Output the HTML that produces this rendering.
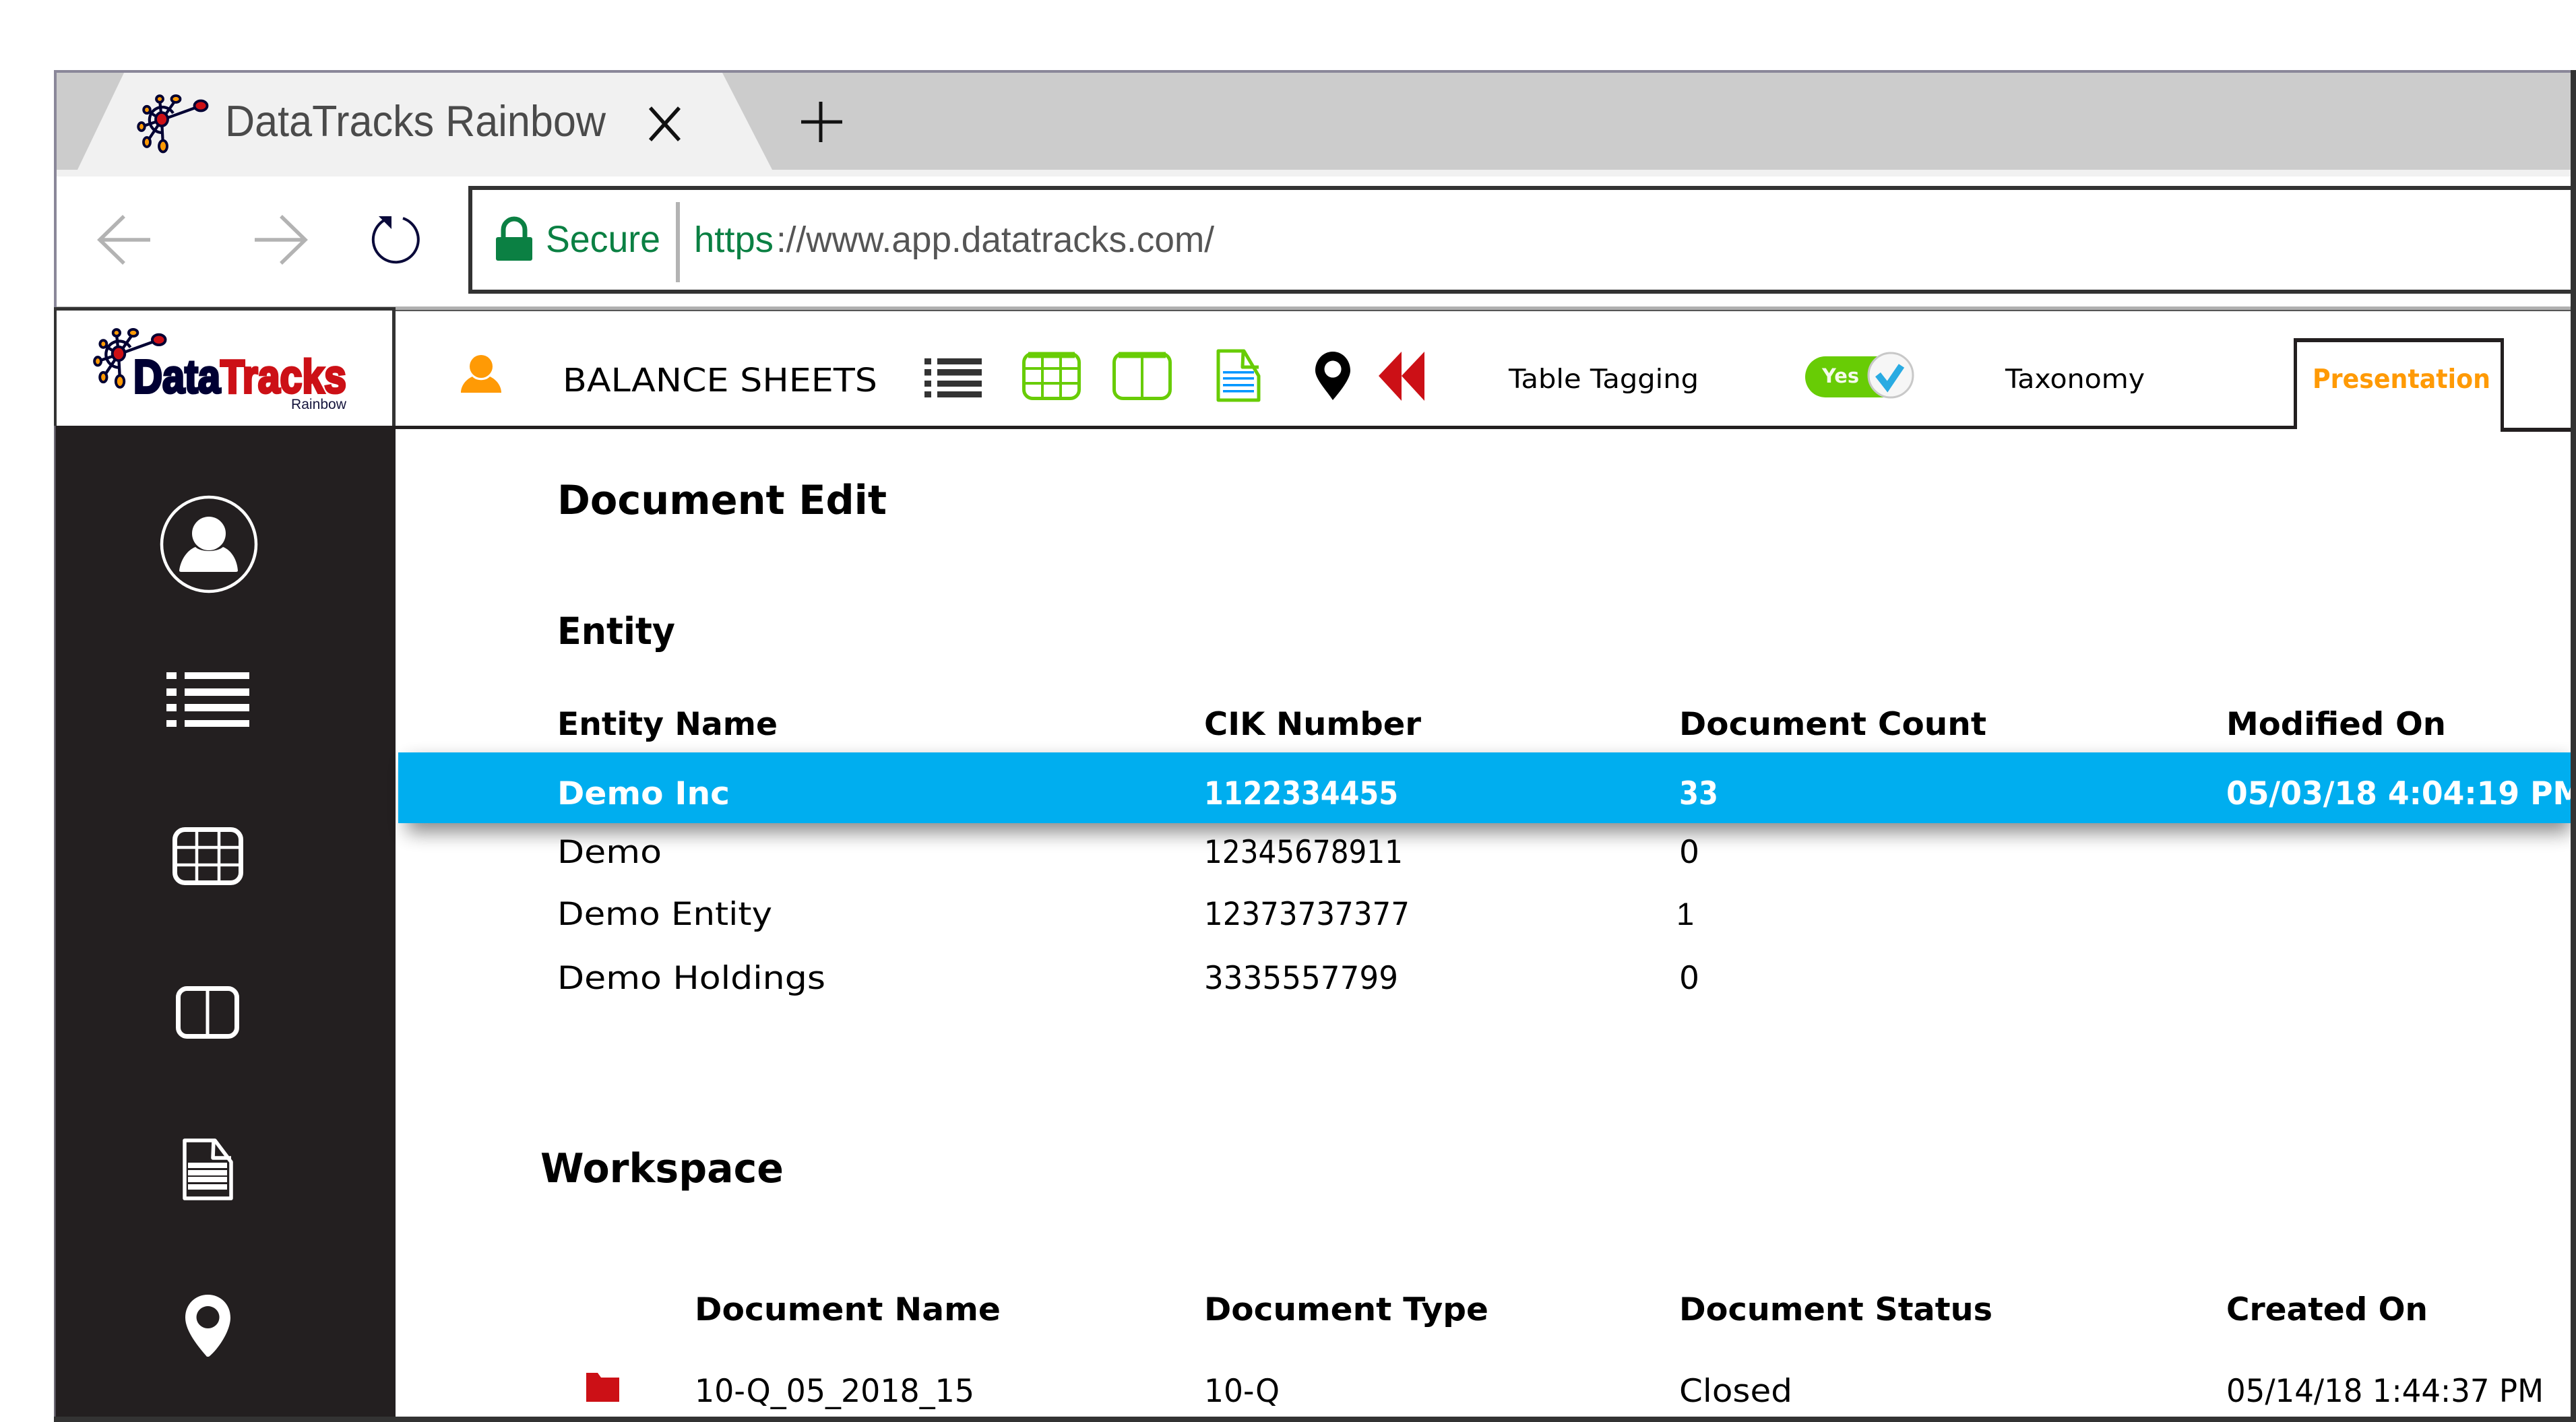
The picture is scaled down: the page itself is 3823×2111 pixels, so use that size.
<!DOCTYPE html>
<html><head><meta charset="utf-8"><title>DataTracks Rainbow</title>
<style>
html,body{margin:0;padding:0;background:#fff;width:3823px;height:2111px;overflow:hidden}
svg{display:block}
text{white-space:pre}
.m{font-family:"DejaVu Sans",sans-serif;fill:#000}
.b{font-family:"DejaVu Sans",sans-serif;fill:#000;font-weight:bold}
.l{font-family:"Liberation Sans",sans-serif}
</style></head><body>
<svg width="3823" height="2111" viewBox="0 0 3823 2111" font-size="47" xmlns="http://www.w3.org/2000/svg">
<defs>
<filter id="sh" filterUnits="userSpaceOnUse" x="500" y="1050" width="3400" height="280"><feGaussianBlur stdDeviation="14"/></filter>
<g id="net">
 <g fill="none" stroke="#000033" stroke-width="4.200">
  <path d="M0 0L58 -21"/><path d="M0 0L21 -30"/><path d="M0 0L-3 -30"/><path d="M0 0L-22 -14"/><path d="M0 0L-30 10"/><path d="M0 0L-22 33"/><path d="M0 0L2 39"/>
  <path d="M17 -10A19 19 0 1 0 0 19" />
 </g>
 <g stroke="#000033" stroke-width="3.800">
  <ellipse cx="0" cy="-1" rx="9" ry="10" fill="#cc1016"/>
  <ellipse cx="58" cy="-21" rx="9.500" ry="7.500" fill="#cc1016"/>
  <ellipse cx="21" cy="-31" rx="6.500" ry="5" fill="#ff9a05"/>
  <ellipse cx="-3" cy="-31" rx="5" ry="4.800" fill="#ff9a05"/>
  <ellipse cx="-22" cy="-15" rx="4.800" ry="5.200" fill="#ff9a05"/>
  <ellipse cx="-30" cy="10" rx="4.800" ry="6" fill="#ff9a05"/>
  <ellipse cx="-22" cy="33" rx="5" ry="7" fill="#ff9a05"/>
  <ellipse cx="2" cy="39" rx="6" ry="8.500" fill="#ff9a05"/>
 </g>
</g>
</defs>
<rect width="3823" height="2111" fill="#fff"/>

<!-- tab strip -->
<rect x="80" y="104" width="3743" height="4" fill="#8a8799"/>
<rect x="84" y="108" width="3731" height="144" fill="#cccccc"/>
<rect x="84" y="252" width="3731" height="10" fill="#f1f1f1"/>
<polygon points="184,108 1072,108 1146,252 115,252" fill="#f1f1f1"/>
<rect x="80" y="104" width="4" height="352" fill="#8a8799"/>
<use href="#net" x="240" y="178"/>
<text class="l" x="334" y="202" font-size="65" fill="#4a4a4a" textLength="565" lengthAdjust="spacingAndGlyphs">DataTracks Rainbow</text>
<path d="M965 160L1008 208M1008 160L965 208" stroke="#111" stroke-width="5.500" fill="none"/>
<path d="M1218 151V211M1189 181H1250" stroke="#111" stroke-width="5" fill="none"/>

<!-- nav bar -->
<path d="M184 321L148 356L184 391M148 356H223" stroke="#b3b3b3" stroke-width="5.500" fill="none"/>
<path d="M417 321L453 356L417 391M378 356H453" stroke="#b3b3b3" stroke-width="5.500" fill="none"/>
<path d="M598 324A33.500 33.500 0 1 1 574 325" stroke="#0a0a3a" stroke-width="4" fill="none"/>
<polygon points="562,321 581,321 581,340" fill="#0a0a3a"/>
<rect x="698" y="279" width="3120" height="154" fill="#fff" stroke="#333" stroke-width="6"/>
<path d="M747 352V341A16 16 0 0 1 779 341V352" fill="none" stroke="#0b8043" stroke-width="7"/>
<rect x="736" y="352" width="54" height="35" rx="3" fill="#0b8043"/>
<text class="l" x="810" y="374" font-size="56" fill="#0b8043" textLength="170" lengthAdjust="spacingAndGlyphs">Secure</text>
<rect x="1003" y="300" width="6" height="119" fill="#b3b3b3"/>
<text class="l" x="1030" y="374" font-size="54" fill="#0b8043" textLength="118" lengthAdjust="spacingAndGlyphs">https</text>
<text class="l" x="1152" y="374" font-size="54" fill="#555" textLength="650" lengthAdjust="spacingAndGlyphs">://www.app.datatracks.com/</text>

<!-- toolbar -->
<rect x="84" y="455" width="3731" height="6" fill="#b0b0b0"/>
<rect x="84" y="460" width="3731" height="2" fill="#555"/>
<rect x="587" y="632" width="2822" height="5" fill="#231f20"/>
<rect x="3711" y="635" width="104" height="6" fill="#231f20"/>
<path d="M3406.500 637V505H3713.500V641" fill="none" stroke="#231f20" stroke-width="5"/>
<rect x="3404" y="502" width="312" height="6" fill="#231f20"/>

<!-- logo box -->
<rect x="84" y="461" width="500" height="171" fill="#fff"/>
<rect x="80" y="456" width="507" height="5" fill="#333"/>
<rect x="80" y="456" width="4" height="180" fill="#333"/>
<rect x="582" y="456" width="5" height="180" fill="#333"/>
<use href="#net" transform="translate(176,526) scale(1.03)"/>
<text class="l" x="198" y="583" font-size="70" font-weight="bold" fill="#000033" stroke="#000033" stroke-width="4" textLength="129" lengthAdjust="spacingAndGlyphs">Data</text>
<text class="l" x="327" y="583" font-size="70" font-weight="bold" fill="#cc1016" stroke="#cc1016" stroke-width="4" textLength="187" lengthAdjust="spacingAndGlyphs">Tracks</text>
<text class="l" x="432" y="607" font-size="21" fill="#14143c" textLength="82" lengthAdjust="spacingAndGlyphs">Rainbow</text>

<!-- sidebar -->
<rect x="80" y="632" width="507" height="1479" fill="#231f20"/>
<rect x="80" y="632" width="2.500" height="1479" fill="#6d6a75"/>
<circle cx="310" cy="808" r="70" fill="none" stroke="#fff" stroke-width="4.500"/>
<ellipse cx="310" cy="792" rx="25" ry="25" fill="#fff"/>
<path d="M290 812C298 820 322 820 331 812C344 817 352 832 353 847Q353 849 350 849H269Q266 849 266 847C268 832 277 817 290 812Z" fill="#fff"/>
<g fill="#fff">
 <rect x="247" y="998" width="15" height="10"/><rect x="274" y="998" width="96" height="10"/>
 <rect x="247" y="1022" width="15" height="11"/><rect x="274" y="1022" width="96" height="11"/>
 <rect x="247" y="1045" width="15" height="11"/><rect x="274" y="1045" width="96" height="11"/>
 <rect x="247" y="1069" width="15" height="10"/><rect x="274" y="1069" width="96" height="10"/>
</g>
<g fill="none" stroke="#fff">
 <rect x="259.500" y="1231.500" width="98" height="79" rx="15" stroke-width="7"/>
 <path d="M292 1232V1310M325 1232V1310M260 1258H357M260 1284H357" stroke-width="4.500"/>
 <rect x="264.500" y="1467.500" width="87" height="71" rx="13" stroke-width="7"/>
 <path d="M308 1468V1538" stroke-width="5"/>
 <path d="M274 1693H319L343 1725V1779H274Z" stroke-width="5.500" stroke-linejoin="round"/>
 <path d="M317 1693L316 1719H343" stroke-width="5.500" stroke-linejoin="round"/>
</g>
<g fill="#fff">
 <rect x="279" y="1726" width="58" height="8"/><rect x="279" y="1737" width="58" height="8"/><rect x="279" y="1747" width="58" height="8"/><rect x="279" y="1758" width="58" height="8"/>
 <path fill-rule="evenodd" d="M308.500 1922C327 1922 342 1936 342 1956C342 1977 322 2005 310 2014H307C296 2001 275 1977 275 1956C275 1936 290 1922 308.500 1922ZM308.500 1939A17 16.500 0 1 0 308.600 1939Z"/>
</g>

<!-- toolbar items -->
<ellipse cx="714" cy="544" rx="17" ry="17" fill="#ff9a05"/>
<path d="M701 559C707 566 721 566 727 559C738 564 744 574 744 583H684C684 574 690 564 701 559Z" fill="#ff9a05"/>
<text class="m" x="835" y="581" font-size="48" textLength="467" lengthAdjust="spacingAndGlyphs">BALANCE SHEETS</text>
<g fill="#333">
 <rect x="1372" y="532" width="10" height="9"/><rect x="1391" y="532" width="66" height="9"/>
 <rect x="1372" y="548" width="10" height="9.500"/><rect x="1391" y="548" width="66" height="9.500"/>
 <rect x="1372" y="565" width="10" height="9"/><rect x="1391" y="565" width="66" height="9"/>
 <rect x="1372" y="581" width="10" height="9"/><rect x="1391" y="581" width="66" height="9"/>
</g>
<g fill="none" stroke="#68cc05">
 <rect x="1519.500" y="525" width="82" height="66.500" rx="13" stroke-width="5"/>
 <path d="M1526 527H1595" stroke-width="9"/>
 <path d="M1547 526V592M1574 526V592M1520 547H1602M1520 569H1602" stroke-width="4"/>
 <rect x="1653.500" y="525" width="83" height="66.500" rx="13" stroke-width="5"/>
 <path d="M1660 527H1730" stroke-width="9"/>
 <path d="M1695 526V592" stroke-width="4"/>
 <path d="M1808 521H1846L1868 558V594H1808Z" stroke-width="5" stroke-linejoin="round"/>
 <path d="M1845 521L1844 545H1868" stroke-width="5" stroke-linejoin="round"/>
</g>
<g fill="#0096ff">
 <rect x="1815" y="551" width="46" height="3.500"/><rect x="1815" y="560" width="46" height="3.500"/><rect x="1815" y="570" width="46" height="3.500"/><rect x="1815" y="579" width="46" height="3.500"/>
</g>
<path fill-rule="evenodd" d="M1978 522C1993 522 2004 535 2004 550C2004 563 1988 582 1978 594C1969 580 1952 563 1952 550C1952 535 1963 522 1978 522ZM1978 535.500A12.500 12.500 0 1 0 1978.100 535.500Z" fill="#000"/>
<polygon points="2046,558 2080,522 2080,595" fill="#cc1016"/>
<polygon points="2080,558 2114,522 2114,595" fill="#cc1016"/>
<text class="m" x="2239" y="576" font-size="39" textLength="282" lengthAdjust="spacingAndGlyphs">Table Tagging</text>
<text class="m" x="2976" y="576" font-size="39" textLength="207" lengthAdjust="spacingAndGlyphs">Taxonomy</text>
<text class="b" x="3432" y="576" font-size="39" style="fill:#ff9a05" textLength="264" lengthAdjust="spacingAndGlyphs">Presentation</text>
<path d="M2709 529H2806V590H2709A30 30.500 0 0 1 2709 529Z" fill="#68cc05"/>
<text class="b" x="2704" y="568" font-size="29" style="fill:#f4faea" textLength="55" lengthAdjust="spacingAndGlyphs">Yes</text>
<circle cx="2806" cy="557" r="33" fill="#f6f6f6" stroke="#c8c8c8" stroke-width="3"/>
<path d="M2787 556L2801 574L2822 543" fill="none" stroke="#29abe2" stroke-width="10"/>

<!-- content -->
<text class="b" x="827" y="763" font-size="60" textLength="489" lengthAdjust="spacingAndGlyphs">Document Edit</text>
<text class="b" x="827" y="956" font-size="55" textLength="175" lengthAdjust="spacingAndGlyphs">Entity</text>
<text class="b" x="827" y="1091" textLength="327" lengthAdjust="spacingAndGlyphs">Entity Name</text>
<text class="b" x="1787" y="1091" textLength="322" lengthAdjust="spacingAndGlyphs">CIK Number</text>
<text class="b" x="2492" y="1091" textLength="456" lengthAdjust="spacingAndGlyphs">Document Count</text>
<text class="b" x="3304" y="1091" textLength="326" lengthAdjust="spacingAndGlyphs">Modified On</text>

<rect x="604" y="1130" width="3211" height="106" fill="#000" opacity=".45" filter="url(#sh)"/>
<rect x="591" y="1117" width="3224" height="105" fill="#00aeef"/>
<text class="b" x="827" y="1194" style="fill:#fff" textLength="256" lengthAdjust="spacingAndGlyphs">Demo Inc</text>
<text class="b" x="1787" y="1194" style="fill:#fff" textLength="288" lengthAdjust="spacingAndGlyphs">1122334455</text>
<text class="b" x="2492" y="1194" style="fill:#fff" textLength="58" lengthAdjust="spacingAndGlyphs">33</text>
<text class="b" x="3304" y="1194" style="fill:#fff" textLength="530" lengthAdjust="spacingAndGlyphs">05/03/18 4:04:19 PM</text>
<text class="m" x="827" y="1281" textLength="155" lengthAdjust="spacingAndGlyphs">Demo</text>
<text class="m" x="1787" y="1281" textLength="295" lengthAdjust="spacingAndGlyphs">12345678911</text>
<text class="m" x="2492" y="1281" textLength="30" lengthAdjust="spacingAndGlyphs">0</text>
<text class="m" x="827" y="1373" textLength="319" lengthAdjust="spacingAndGlyphs">Demo Entity</text>
<text class="m" x="1787" y="1373" textLength="305" lengthAdjust="spacingAndGlyphs">12373737377</text>
<text class="l" x="2488" y="1373" fill="#000">1</text>
<text class="m" x="827" y="1468" textLength="398" lengthAdjust="spacingAndGlyphs">Demo Holdings</text>
<text class="m" x="1787" y="1468" textLength="288" lengthAdjust="spacingAndGlyphs">3335557799</text>
<text class="m" x="2492" y="1468" textLength="30" lengthAdjust="spacingAndGlyphs">0</text>

<text class="b" x="802" y="1755" font-size="60" textLength="361" lengthAdjust="spacingAndGlyphs">Workspace</text>
<text class="b" x="1031" y="1960" textLength="454" lengthAdjust="spacingAndGlyphs">Document Name</text>
<text class="b" x="1787" y="1960" textLength="422" lengthAdjust="spacingAndGlyphs">Document Type</text>
<text class="b" x="2492" y="1960" textLength="465" lengthAdjust="spacingAndGlyphs">Document Status</text>
<text class="b" x="3304" y="1960" textLength="299" lengthAdjust="spacingAndGlyphs">Created On</text>
<path d="M870 2038H887L892 2045H919V2081H870Z" fill="#cc1016"/>
<text class="m" x="1031" y="2081" textLength="415" lengthAdjust="spacingAndGlyphs">10-Q_05_2018_15</text>
<text class="m" x="1787" y="2081" textLength="112" lengthAdjust="spacingAndGlyphs">10-Q</text>
<text class="m" x="2492" y="2081" textLength="168" lengthAdjust="spacingAndGlyphs">Closed</text>
<text class="m" x="3304" y="2081" textLength="471" lengthAdjust="spacingAndGlyphs">05/14/18 1:44:37 PM</text>

<!-- window borders -->
<rect x="3815" y="104" width="8" height="2007" fill="#333"/>
<rect x="80" y="2103" width="3743" height="8" fill="#333"/>
</svg>
</body></html>
